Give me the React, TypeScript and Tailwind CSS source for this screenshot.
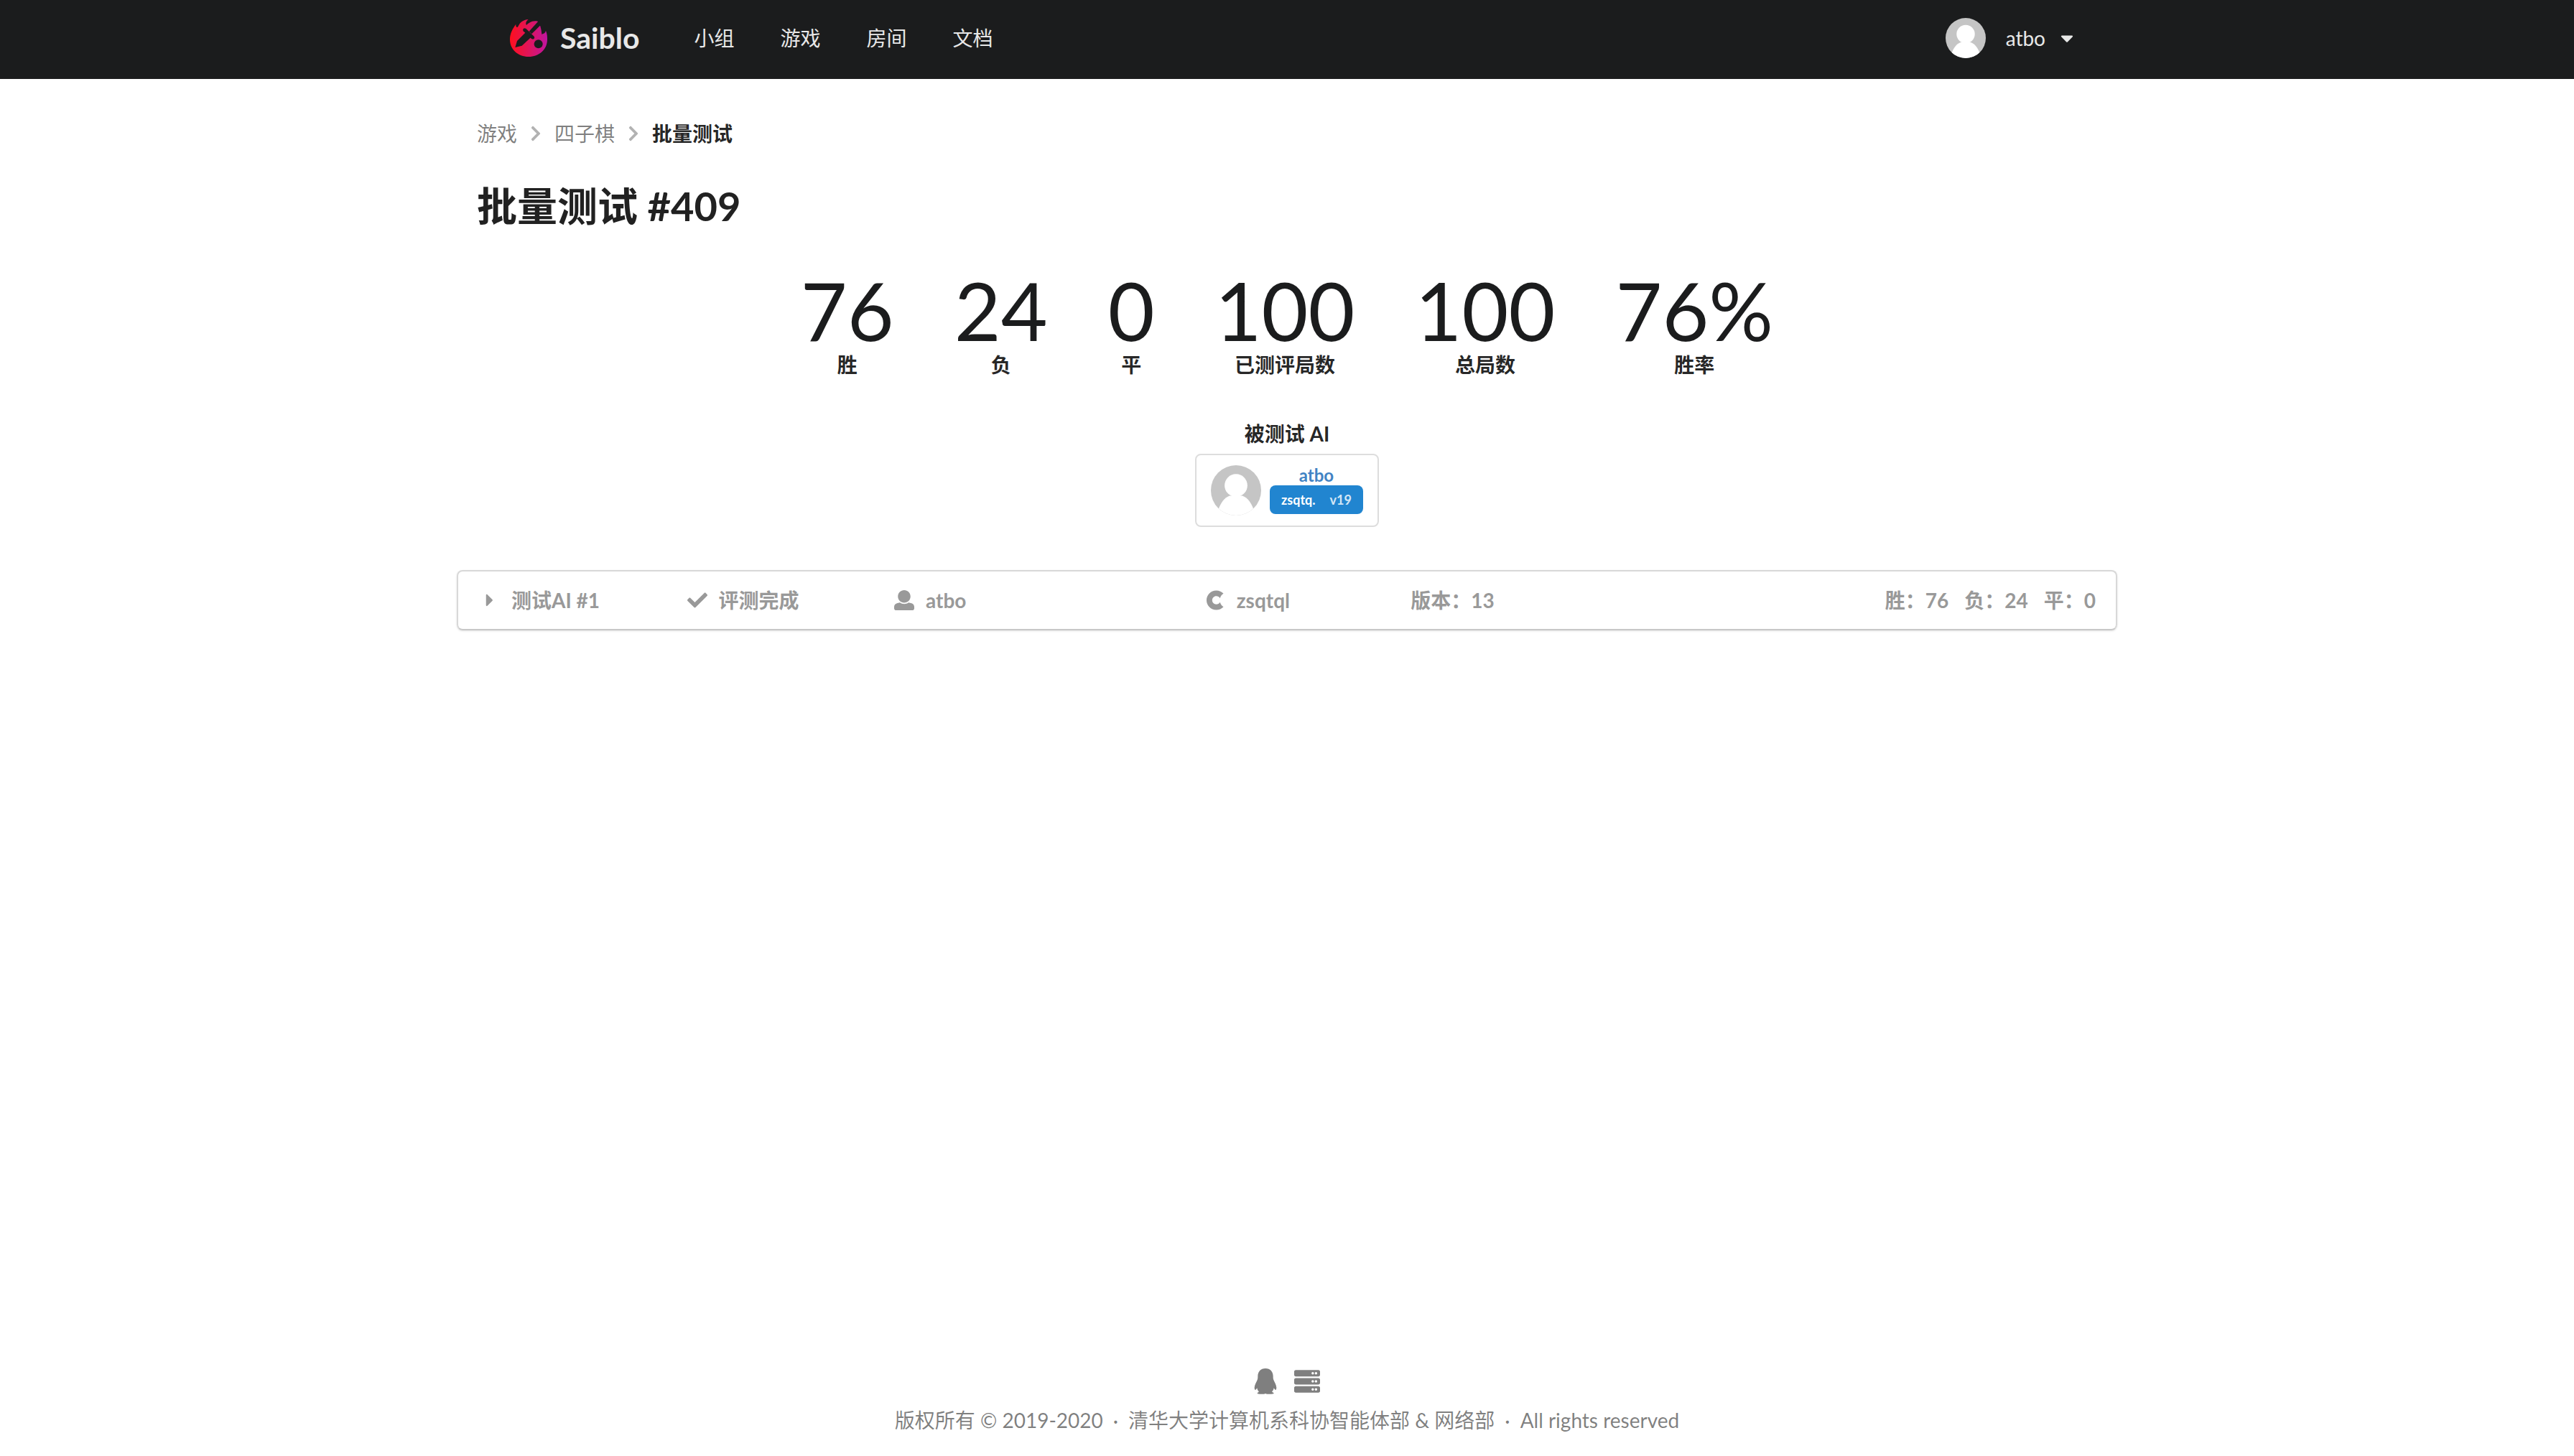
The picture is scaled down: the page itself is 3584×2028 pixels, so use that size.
import React from "react";
import { FaCheck, FaChevronRight, FaCaretDown, FaCaretRight, FaCuttlefish, FaServer } from "react-icons/fa";

const navItems = ["小组", "游戏", "房间", "文档"];

const statistics = [
  { value: "76", label: "胜" },
  { value: "24", label: "负" },
  { value: "0", label: "平" },
  { value: "100", label: "已测评局数" },
  { value: "100", label: "总局数" },
  { value: "76%", label: "胜率" },
];

function Logo() {
  return (
    <svg viewBox="0 0 156 156" className="size-13" aria-hidden="true">
      <defs>
        <linearGradient id="flame" x1="0" y1="0" x2="1" y2="0">
          <stop offset="0" stopColor="#ff0f1e" />
          <stop offset="0.5" stopColor="#e0155a" />
          <stop offset="1" stopColor="#c014a0" />
        </linearGradient>
        <mask id="sword">
          <rect width="156" height="156" fill="#fff" />
          <path d="M122 4 L80 50 L91 61 L134 18 Z" fill="#000" />
          <path d="M54 43 L59 37 L67 38 L101 71 L103 78 L97 83 L90 81 L56 49 Z" fill="#000" />
          <path d="M66 54 L87 76 L50 110 L22 117 L30 90 Z" fill="#000" />
          <circle cx="119" cy="103" r="18" fill="#000" />
        </mask>
      </defs>
      <path
        mask="url(#sword)"
        fill="url(#flame)"
        d="M0 84 C0 58 12 38 25 20 C24 28 26 32 31 33 C38 30 38 4 77 0 C67 8 65 17 69 24 C78 16 92 3 116 8 C126 18 131 38 133 62 C142 60 148 56 150 47 C156 62 156 74 156 84 C156 126 122 156 78 156 C34 156 0 126 0 84 Z"
      />
    </svg>
  );
}

function Avatar({ className }: { className: string }) {
  return (
    <svg viewBox="0 0 56 56" className={className} role="img" aria-label="atbo">
      <defs>
        <clipPath id="avatarClip">
          <circle cx="28" cy="28" r="28" />
        </clipPath>
      </defs>
      <g clipPath="url(#avatarClip)">
        <rect width="56" height="56" fill="#c5c5c5" />
        <circle cx="28" cy="22.5" r="12.7" fill="#fff" />
        <path d="M21 34 H35 C41 36 45 42 47.5 49 L46 56 H10 L8.500 49 C11 42 15 36 21 34 Z" fill="#fff" />
      </g>
    </svg>
  );
}

function UserIcon() {
  return (
    <svg viewBox="0 0 512 512" className="size-7" fill="currentColor" aria-hidden="true">
      <path d="M256 0c88.366 0 160 71.634 160 160s-71.634 160-160 160S96 248.366 96 160 167.634 0 256 0zm183.283 333.821l-71.313-17.828c-74.923 53.89-165.738 41.864-223.94 0l-71.313 17.828C29.981 344.505 0 382.903 0 426.955V464c0 26.51 21.49 48 48 48h416c26.51 0 48-21.49 48-48v-37.045c0-44.052-29.981-82.45-72.717-93.134z" />
    </svg>
  );
}

function PenguinIcon() {
  return (
    <svg viewBox="0 0 92 108" className="h-9 w-8" fill="currentColor" aria-hidden="true">
      <path d="M46 0 C66 0 78 14 78 32 C78 38 78 42 80 48 C84 58 91 68 92 80 C92 86 90 90 88 90 C86 90 84 86 81 82 C80 89 77 94 73 98 C78 100 81 102 81 104 C81 108 54 109 46 105 C38 109 12 108 12 104 C12 102 14 100 19 98 C15 94 12 89 11 82 C8 86 6 90 4 90 C2 90 0 86 0 80 C1 68 8 58 12 48 C14 42 14 38 14 32 C14 14 26 0 46 0 Z" />
    </svg>
  );
}

export default function App() {
  return (
    <div className="flex min-h-screen flex-col bg-white font-['Lato','Noto_Sans_CJK_SC',sans-serif] text-[28px] leading-10 text-black/87">
      <header className="bg-[#1b1c1d] text-white/90">
        <div className="mx-auto flex h-[110px] w-full max-w-[2312px] items-center justify-between pr-14 pb-1 pl-[74px]">
          <div className="flex items-center">
            <a href="#home" className="mr-11 flex items-center gap-[18px] text-[41px] font-bold">
              <Logo />
              Saiblo
            </a>
            <nav className="flex">
              {navItems.map((item) => (
                <a key={item} href="#nav" className="px-8">
                  {item}
                </a>
              ))}
            </nav>
          </div>
          <button type="button" className="flex items-center">
            <Avatar className="mr-7 size-14" />
            atbo
            <FaCaretDown className="ml-4 size-7" />
          </button>
        </div>
      </header>

      <main className="mx-auto w-full max-w-[2312px] grow pt-14">
        <div className="px-7">
          <nav aria-label="breadcrumb" className="flex items-center">
            <a href="#games" className="text-black/50">游戏</a>
            <FaChevronRight className="mx-3.5 size-6 text-black/30" />
            <a href="#game" className="text-black/50">四子棋</a>
            <FaChevronRight className="mx-3.5 size-6 text-black/30" />
            <span className="font-bold">批量测试</span>
          </nav>
          <h1 className="mt-11 text-[56px] leading-[74px] font-bold">批量测试 #409</h1>
        </div>

        <dl className="mt-[52px] flex justify-center gap-[84px]">
          {statistics.map((s) => (
            <div key={s.label} className="flex flex-col-reverse items-center">
              <dt className="font-bold">{s.label}</dt>
              <dd className="text-[112px] leading-[112px] text-[#1b1c1d]">{s.value}</dd>
            </div>
          ))}
        </dl>

        <section className="mt-14 flex flex-col items-center">
          <h2 className="font-bold">被测试 AI</h2>
          <div className="mt-2 flex items-start gap-3 rounded-lg border-2 border-[#dddddd] px-5 py-3.5">
            <Avatar className="size-[70px]" />
            <div className="flex flex-col items-center">
              <a href="#user" className="text-2xl leading-7 font-bold text-[#4183c4]">atbo</a>
              <a href="#ai" className="flex h-10 items-center gap-5 rounded-lg bg-[#2185d0] px-4 text-[18px] font-bold text-white">
                zsqtq.
                <span className="text-white/80">v19</span>
              </a>
            </div>
          </div>
        </section>

        <button
          type="button"
          className="mt-15 grid w-full grid-cols-16 items-center rounded-lg border-2 border-[#d8d8d8] border-b-[#c8c8c8] py-5 text-left font-bold text-[#999999] shadow-sm"
        >
          <span className="col-span-2 flex items-center gap-4 pl-[30px]">
            <FaCaretRight className="size-7" />
            测试AI #1
          </span>
          <span className="col-span-2 flex items-center gap-4 pl-[30px]">
            <FaCheck className="size-7" />
            评测完成
          </span>
          <span className="col-span-3 flex items-center gap-4 pl-[30px]">
            <UserIcon />
            atbo
          </span>
          <span className="col-span-2 flex items-center gap-4 pl-[30px]">
            <FaCuttlefish className="size-7" />
            zsqtql
          </span>
          <span className="col-span-2 pl-7">版本：13</span>
          <span className="col-span-5 flex justify-end gap-[22px] pr-7">
            <span>胜：76</span>
            <span>负：24</span>
            <span>平：0</span>
          </span>
        </button>
      </main>

      <footer className="flex flex-col items-center pb-[30px] text-black/50">
        <div className="mb-4 flex items-center gap-6">
          <a href="#qq" aria-label="QQ"><PenguinIcon /></a>
          <a href="#servers" aria-label="Servers"><FaServer className="size-9" /></a>
        </div>
        <p className="flex gap-3.5">
          <span>版权所有 © 2019-2020</span>
          <span>·</span>
          <span>清华大学计算机系科协智能体部 &amp; 网络部</span>
          <span>·</span>
          <span>All rights reserved</span>
        </p>
      </footer>
    </div>
  );
}
